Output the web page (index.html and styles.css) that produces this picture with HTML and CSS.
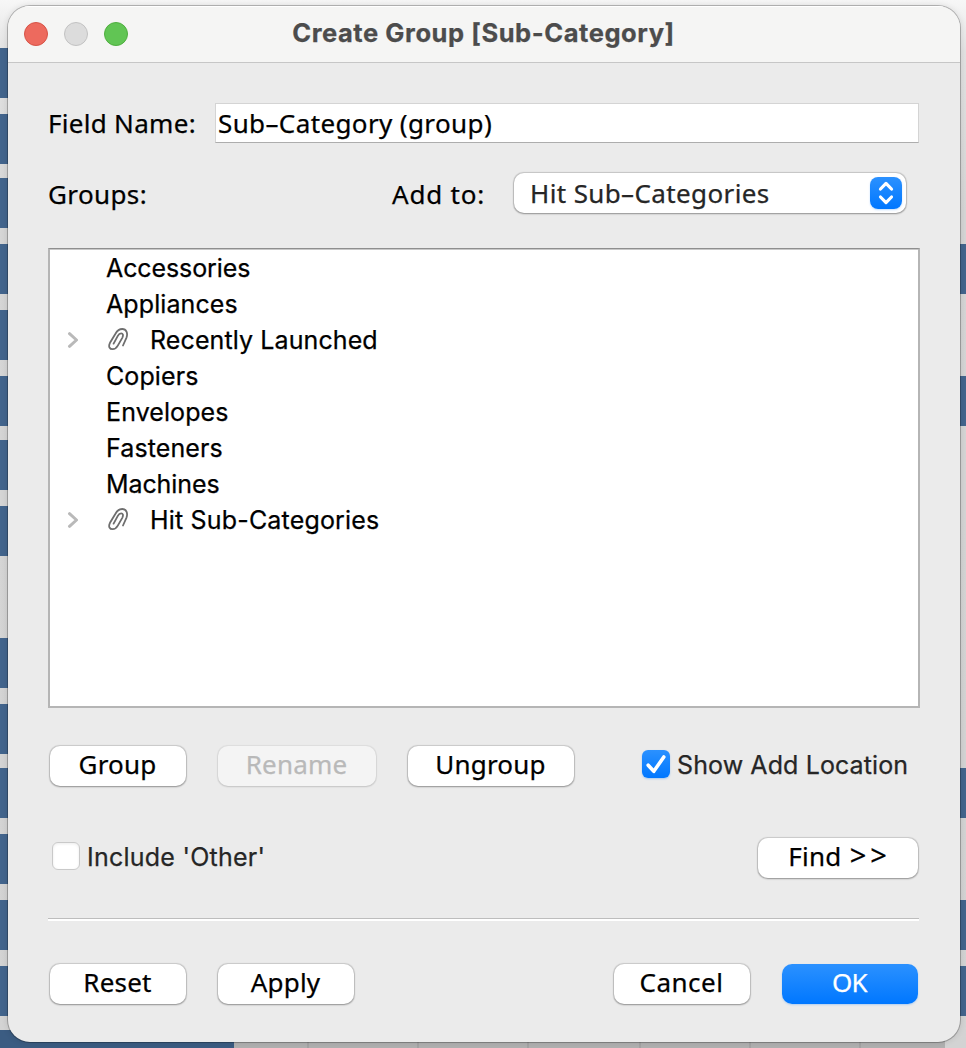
FILE: index.html
```html
<!DOCTYPE html>
<html lang="en">
<head>
<meta charset="utf-8">
<title>Create Group [Sub-Category]</title>
<link rel="stylesheet" href="styles.css">
</head>
<body>
<svg class="backdrop" width="966" height="1048" viewBox="0 0 966 1048" aria-hidden="true">
  <defs>
    <linearGradient id="paper" x1="0" y1="0" x2="0" y2="1">
      <stop offset="0" stop-color="#f7f7f7"/>
      <stop offset="0.05" stop-color="#e2e2e2"/>
      <stop offset="0.2" stop-color="#d6d6d6"/>
      <stop offset="1" stop-color="#d3d3d3"/>
    </linearGradient>
  </defs>
  <rect width="966" height="1048" fill="url(#paper)"/>
  <rect x="20" y="1030" width="925" height="18" fill="#b1b1b1"/>
  <path d="M308 1040v8M418 1040v8M528 1040v8M640 1040v8M750 1040v8M860 1040v8" stroke="#a4a4a4" stroke-width="2"/>
  <path fill="#43658d" d="M0 48h40v50H0zM0 114h40v50H0zM0 178h40v50H0zM0 244h40v50H0zM0 310h40v50H0zM0 376h40v50H0zM0 440h40v50H0zM0 506h40v50H0zM0 638h40v50H0zM0 704h40v50H0zM0 768h40v50H0zM0 834h40v50H0zM0 900h40v50H0zM0 966h40v50H0zM940 244h26v50h-26zM940 376h26v50h-26zM940 768h26v50h-26zM940 900h26v50h-26zM940 966h26v50h-26z"/>
  <path fill="#3b5c82" d="M0 1030h234v18H0z"/>
</svg>
<main class="window">
  <header class="titlebar">
    <div class="lights"><i class="light red"></i><i class="light gray"></i><i class="light green"></i></div>
    <h1 class="title">Create Group [Sub-Category]</h1>
  </header>
  <div class="content">
    <div class="field-row">
      <label class="label-field" for="name">Field Name:</label>
      <input id="name" class="name-input" value="Sub–Category (group)">
    </div>
    <div class="groups-row">
      <span class="label-groups">Groups:</span>
      <span class="label-add">Add to:</span>
      <div class="select">
        <span>Hit Sub–Categories</span>
        <svg class="stepper" width="32" height="32" viewBox="0 0 32 32"><path d="M10.500 12 16 6.400l5.500 5.600M10.500 20 16 25.600l5.500-5.600" fill="none" stroke="#fff" stroke-width="3.200" stroke-linecap="round" stroke-linejoin="round"/></svg>
      </div>
    </div>
    <ul class="list">
      <li class="item t1">Accessories</li>
      <li class="item">Appliances</li>
      <li class="item group">
        <svg class="chevron" width="12" height="16" viewBox="0 0 12 16"><path d="M2.500 1.700 9.500 8 2.500 14.300" fill="none" stroke="#b9b9b9" stroke-width="3" stroke-linecap="round" stroke-linejoin="round"/></svg>
        <svg class="clip" width="21" height="23" viewBox="0 0 21 23"><path d="M15 17.500 18.400 9.800C20.200 5.200 18.200 1 14.300 1 11 1 9 3 7.600 5.500L2 14.800C0 18.800 1.800 21.200 4.600 21.200 7 21.200 8.600 19.800 9.800 17.600L14.400 9.600C15.600 7 14.900 5.300 13.200 5.300 11.700 5.300 10.600 6.300 9.800 7.800L5.600 15.600" fill="none" stroke="#6e6e6e" stroke-width="1.800" stroke-linecap="round"/></svg>
        <span>Recently Launched</span>
      </li>
      <li class="item">Copiers</li>
      <li class="item">Envelopes</li>
      <li class="item">Fasteners</li>
      <li class="item t1">Machines</li>
      <li class="item group">
        <svg class="chevron" width="12" height="16" viewBox="0 0 12 16"><path d="M2.500 1.700 9.500 8 2.500 14.300" fill="none" stroke="#b9b9b9" stroke-width="3" stroke-linecap="round" stroke-linejoin="round"/></svg>
        <svg class="clip" width="21" height="23" viewBox="0 0 21 23"><path d="M15 17.500 18.400 9.800C20.200 5.200 18.200 1 14.300 1 11 1 9 3 7.600 5.500L2 14.800C0 18.800 1.800 21.200 4.600 21.200 7 21.200 8.600 19.800 9.800 17.600L14.400 9.600C15.600 7 14.900 5.300 13.200 5.300 11.700 5.300 10.600 6.300 9.800 7.800L5.600 15.600" fill="none" stroke="#6e6e6e" stroke-width="1.800" stroke-linecap="round"/></svg>
        <span class="wide">Hit Sub-Categories</span>
      </li>
    </ul>
    <div class="actions">
      <button class="btn w136">Group</button>
      <button class="btn w158" disabled>Rename</button>
      <button class="btn w166">Ungroup</button>
      <label class="check show">
        <svg class="box on" width="28" height="28" viewBox="0 0 28 28"><path d="M6.200 15.200 11.800 21.300 21.800 7" fill="none" stroke="#fff" stroke-width="3.600" stroke-linecap="round" stroke-linejoin="round"/></svg>
        <span>Show Add Location</span>
      </label>
    </div>
    <div class="options">
      <label class="check include"><i class="box"></i><span>Include 'Other'</span></label>
      <button class="btn w160 find">Find <span class="arrows">&gt;&gt;</span></button>
    </div>
    <hr class="rule">
    <footer class="footer">
      <button class="btn w136">Reset</button>
      <button class="btn w136">Apply</button>
      <button class="btn w136 push cancel">Cancel</button>
      <button class="btn w136 primary">OK</button>
    </footer>
  </div>
</main>
</body>
</html>
```
FILE: styles.css
```css
* { box-sizing: border-box; }
html, body { margin: 0; }
body {
  width: 966px;
  height: 1048px;
  padding: 6px 0 0 8px;
  overflow: hidden;
  background: #d5d5d5;
  color: #000;
  font: 26px/36px "Noto Sans", "Open Sans", sans-serif;
  letter-spacing: 0.38px;
  -webkit-text-stroke: 0.25px;
}
.backdrop { position: absolute; left: 0; top: 0; z-index: -1; }
.window {
  width: 952px;
  height: 1036px;
  border-radius: 22px;
  overflow: hidden;
  background: #ebebeb;
  box-shadow: 0 0 0 1px rgba(0, 0, 0, .24), 0 0 7px rgba(0, 0, 0, .14);
}
.titlebar {
  position: relative;
  display: flex;
  align-items: center;
  justify-content: center;
  height: 57px;
  padding-bottom: 2px;
  border-bottom: 1px solid #c6c6c6;
  background: #f5f5f4;
  box-shadow: inset 0 1px #fff;
}
.lights { position: absolute; left: 16px; top: 16px; display: flex; gap: 16px; }
.light { width: 24px; height: 24px; border-radius: 50%; border: 1px solid #d65347; background: #ed6a5e; }
.light.gray { background: #dcdcdc; border-color: #c2c2c2; }
.light.green { background: #61c554; border-color: #4fae3f; }
.title { margin: 0 1px 0 0; font: 700 25.5px/36px Inter, sans-serif; letter-spacing: 0.56px; color: #4c4c4c; }
.content { padding: 40px 40px 0; }
.field-row { display: flex; height: 40px; align-items: center; }
.label-field { width: 167px; letter-spacing: 0.3px; }
.name-input {
  width: 704px;
  height: 40px;
  padding: 0 0 0 2px;
  border: 1px solid #d4d4d4;
  border-bottom-color: #adadad;
  border-radius: 0;
  outline: 0;
  background: #fff;
  color: #000;
  font: inherit;
  letter-spacing: 0.38px;
}
.groups-row { display: flex; align-items: center; height: 40px; margin-top: 30px; }
.label-groups { width: 344px; padding-top: 2px; }
.label-add { width: 121px; padding-top: 2px; letter-spacing: 0.8px; }
.select {
  display: flex;
  align-items: center;
  justify-content: space-between;
  width: 392px;
  height: 40px;
  margin-left: 1px;
  padding: 0 4px 0 16px;
  border-radius: 10px;
  background: #fff;
  color: #262626;
  box-shadow: 0 0 1px 0.5px rgba(0, 0, 0, .16), 0 1px 2px rgba(0, 0, 0, .26);
}
.stepper { border-radius: 8px; background: linear-gradient(#2b91ff, #0077ff); box-shadow: 0 1px 2px rgba(0, 122, 255, .25); }
.list {
  width: 872px;
  height: 460px;
  margin: 35px 0 0;
  padding: 1px 0 0;
  border: 2px solid #b5b5b5;
  border-top: 1px solid #8e8e8e;
  background: #fff;
  box-shadow: inset 0 1px #c8c8c8;
  list-style: none;
  font: 25px/36px Inter, sans-serif;
  letter-spacing: 0.1px;
}
.item { height: 36px; padding-left: 56px; }
.item.t1 { letter-spacing: -0.1px; }
.item.group { display: flex; align-items: center; padding-left: 17px; }
.chevron { margin: 0 29px 1px 0; }
.clip { margin: 0 21px 2px 0; }
.wide { letter-spacing: 0.18px; }
.actions { display: flex; height: 40px; margin: 38px 0 0 2px; }
.btn {
  height: 40px;
  padding: 0 1px 4px 0;
  border: 0;
  border-radius: 10px;
  background: #fff;
  color: #000;
  font: inherit;
  letter-spacing: 0.2px;
  box-shadow: 0 0 1px 0.5px rgba(0, 0, 0, .14), 0 1px 2px rgba(0, 0, 0, .28);
}
.btn:disabled { background: #f4f4f4; color: #b9b9b9; box-shadow: 0 0 1px 0.5px rgba(0, 0, 0, .06), 0 1px 2px rgba(0, 0, 0, .12); }
.w136 { width: 136px; }
.w158 { width: 158px; }
.w160 { width: 160px; }
.w166 { width: 166px; }
.w136 + .btn, .w158 + .btn { margin-left: 32px; }
.cancel { letter-spacing: 0.5px; }
.primary { background: linear-gradient(#2b91ff, #0077ff); color: #fff; letter-spacing: -0.8px; box-shadow: 0 1px 2px rgba(0, 122, 255, .25); }
.check {
  display: flex;
  align-items: center;
  gap: 7px;
  height: 36px;
  color: #262626;
  font: 25px/36px Inter, sans-serif;
  letter-spacing: 0.1px;
}
.check span { padding-top: 2px; }
.show { margin-left: 68px; }
.include { letter-spacing: 0.24px; }
.box { width: 28px; height: 28px; border: 1px solid #c9c9c9; border-radius: 6px; background: #fff; box-shadow: inset 0 1px 3px rgba(0, 0, 0, .08); }
.box.on { border: 0; background: linear-gradient(#2b91ff, #0077ff); box-shadow: 0 1px 2px rgba(0, 122, 255, .3); }
.options { display: flex; justify-content: space-between; height: 40px; margin: 52px 2px 0 4px; }
.arrows { font-size: 29px; line-height: 30px; letter-spacing: 4px; margin-right: -4px; }
.find { letter-spacing: 0.3px; word-spacing: 1px; }
.rule { height: 3px; width: 871px; margin: 40px 0 0; border: 0; border-top: 1px solid #bdbdbd; background: #fff; }
.footer { display: flex; height: 40px; margin: 43px 2px 0; }
.footer .push { margin-left: auto; }
```
